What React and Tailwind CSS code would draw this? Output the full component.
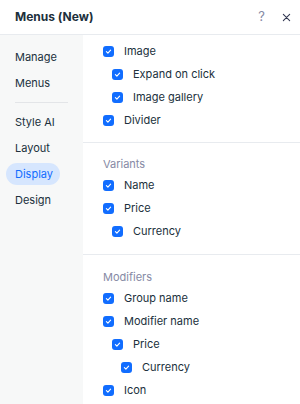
import React from "react";

const font = { fontFamily: "Inter, 'Noto Sans', sans-serif" };

const Check = () => (
  <span className="flex h-[11px] w-[11px] shrink-0 items-center justify-center rounded-[3px] bg-[#116dff]">
    <svg width="7" height="7" viewBox="0 0 8 8" fill="none">
      <path d="M1.6 4.2 3.3 5.8 6.4 2.4" stroke="white" strokeWidth="1.3" strokeLinecap="round" strokeLinejoin="round" />
    </svg>
  </span>
);

const Row = ({ label, level = 0 }) => {
  const indent = ["pl-[20px]", "pl-[29px]", "pl-[38px]"][level];
  return (
    <div className={`flex h-[23px] items-center gap-[10px] ${indent}`}>
      <Check />
      <span className="text-[11px] text-[#20303c]">{label}</span>
    </div>
  );
};

const Section = ({ title, rows, pad, last }) => (
  <div className={`${pad} ${last ? "" : "border-b border-[#e8ebef]"}`}>
    {title && (
      <div className="flex h-[20px] items-center pl-[20px] text-[11px] text-[#868aa5]">{title}</div>
    )}
    {rows.map((r, i) => (
      <Row key={i} label={r[0]} level={r[1]} />
    ))}
  </div>
);

export default function App() {
  const nav = ["Manage", "Menus", null, "Style AI", "Layout", "Display", "Design"];
  return (
    <div className="flex h-[404px] w-[300px] flex-col overflow-hidden bg-white" style={font}>
      <div className="flex h-[35px] shrink-0 items-center justify-between border-b border-[#e8ebef] pl-[15px] pr-[9px]">
        <span className="text-[12px] font-bold text-[#20303c]">Menus (New)</span>
        <div className="flex items-center gap-[17px] text-[#333853]">
          <span className="text-[13px] text-[#868aa5]">?</span>
          <svg width="9" height="9" viewBox="0 0 10 10">
            <path d="M1.5 1.5 8.5 8.5M8.5 1.5 1.5 8.5" stroke="#333853" strokeWidth="1.2" strokeLinecap="round" />
          </svg>
        </div>
      </div>
      <div className="flex min-h-0 flex-1">
        <div className="w-[83px] shrink-0 bg-[#f7f8f8] pt-[9px]">
          {nav.map((n, i) =>
            n === null ? (
              <div key={i} className="mx-[15px] my-[6px] h-px bg-[#e3e5e8]" />
            ) : (
              <div key={i} className="flex h-[26px] items-center px-[6px]">
                <span
                  className={`flex h-[22px] items-center rounded-full px-[9px] text-[11px] ${
                    n === "Display" ? "bg-[#d6e6fe] pr-[7px] text-[#116dff]" : "text-[#20303c]"
                  }`}
                >
                  {n}
                </span>
              </div>
            )
          )}
        </div>
        <div className="flex-1">
          <Section
            pad="pt-[5px] pb-[10px]"
            rows={[
              ["Image", 0],
              ["Expand on click", 1],
              ["Image gallery", 1],
              ["Divider", 0],
            ]}
          />
          <Section
            title="Variants"
            pad="pt-[11px] pb-[11px]"
            rows={[
              ["Name", 0],
              ["Price", 0],
              ["Currency", 1],
            ]}
          />
          <Section
            title="Modifiers"
            pad="pt-[12px]"
            last
            rows={[
              ["Group name", 0],
              ["Modifier name", 0],
              ["Price", 1],
              ["Currency", 2],
              ["Icon", 0],
            ]}
          />
        </div>
      </div>
    </div>
  );
}
